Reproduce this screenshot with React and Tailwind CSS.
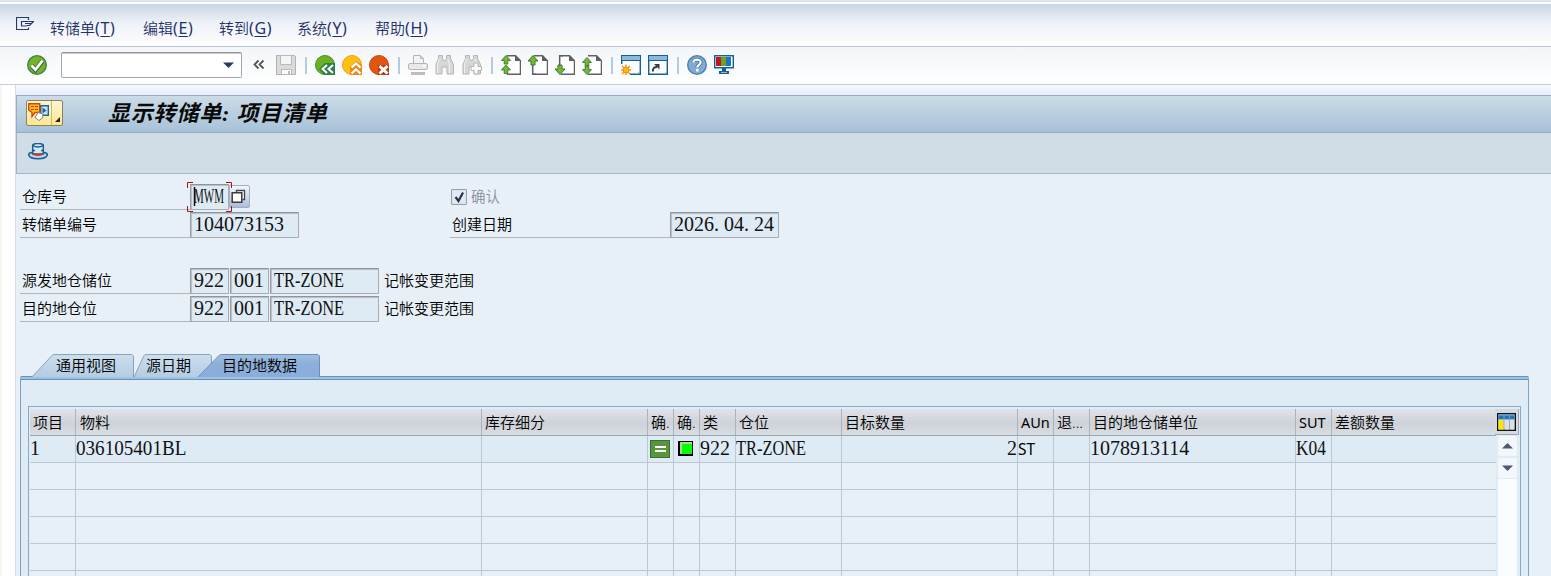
const SANS = "font-['Noto_Sans','Noto_Sans_CJK_SC',sans-serif]";

const MENUS = [
  { label: "转储单", hotkey: "T", cls: "w-[93px]" },
  { label: "编辑", hotkey: "E", cls: "w-[76px]" },
  { label: "转到", hotkey: "G", cls: "w-[78px]" },
  { label: "系统", hotkey: "Y", cls: "w-[78px]" },
  { label: "帮助", hotkey: "H", cls: "w-[76px]" },
];

const COLUMNS = [
  { title: "项目", cls: "w-[46px]", pad: "pl-[3px]" },
  { title: "物料", cls: "w-[406px]", pad: "pl-[4px]" },
  { title: "库存细分", cls: "w-[166px]", pad: "pl-[3px]" },
  { title: "确.", cls: "w-[26px]", pad: "pl-[3px]" },
  { title: "确.", cls: "w-[26px]", pad: "pl-[3px]" },
  { title: "类", cls: "w-[36px]", pad: "pl-[3px]" },
  { title: "仓位", cls: "w-[106px]", pad: "pl-[3px]" },
  { title: "目标数量", cls: "w-[176px]", pad: "pl-[3px]" },
  { title: "AUn", cls: "w-[36px]", pad: "pl-[3px]" },
  { title: "退...", cls: "w-[36px]", pad: "pl-[3px]" },
  { title: "目的地仓储单位", cls: "w-[206px]", pad: "pl-[3px]" },
  { title: "SUT", cls: "w-[36px]", pad: "pl-[3px]" },
  { title: "差额数量", cls: "w-[164px]", pad: "pl-[3px]" },
];

function Icon({ children, w = 20, h = 20 }) {
  return (
    <svg width={w} height={h} viewBox={`0 0 ${w} ${h}`} className="shrink-0" fill="none">
      {children}
    </svg>
  );
}

function Value({ children, squeeze = "" }) {
  return (
    <span className={`inline-block origin-left whitespace-pre font-['Liberation_Serif',serif] text-[20px] leading-6 text-[#111] ${squeeze}`}>
      {children}
    </span>
  );
}

function Separator() {
  return <div className="ml-[9px] mr-2 h-[17px] w-[2px] shrink-0 bg-[#b3cae3]" />;
}

function MenuBar() {
  return (
    <div className="flex h-[43px] items-start border-b border-[#bcc5d6] bg-linear-to-b from-[#c9d6e7] via-[#eef2f8] via-45% to-[#fdfdfe] pl-4">
      <div className="mt-[13px] w-[34px]">
        <Icon w={19} h={14}>
          <path d="M12.500 3V.500H.500v12h12v-2" stroke="#27396c" strokeWidth="1.200" />
          <path d="M18 4.500H5.500v4.500h5M9 6.500h7M17.500 4.500l-4 4h-3" stroke="#27396c" strokeWidth="1.200" />
        </Icon>
      </div>
      {MENUS.map((m) => (
        <div key={m.label} className={`${m.cls} mt-[14px] flex shrink-0 items-baseline whitespace-nowrap text-[15px] leading-5 text-[#1f3268]`}>
          <span>{m.label}</span>
          <span className="text-[16px] font-normal tracking-[0.6px]">
            (<span className="underline underline-offset-2">{m.hotkey}</span>)
          </span>
        </div>
      ))}
    </div>
  );
}

function CheckIcon() {
  return (
    <Icon>
      <circle cx="10" cy="10" r="9.300" fill="#73b428" stroke="#3c7d4d" strokeWidth="1.300" />
      <path d="M4.500 10.500l4 4.500 7-9" stroke="#31683a" strokeWidth="4.500" />
      <path d="M4.500 10.500l4 4.200 7-9" stroke="#fff" strokeWidth="2.700" />
    </Icon>
  );
}

function SaveIcon() {
  return (
    <Icon>
      <path d="M.5.500h18l1 1v18h-19z" fill="#dadada" stroke="#b2b2b2" />
      <path d="M4.500.500h11v9h-11z" fill="#f4f4f4" stroke="#b9b9b9" />
      <path d="M5.500 14.500h10v5h-10z" fill="#fff" stroke="#b9b9b9" />
      <path d="M12 16h2v3h-2z" fill="#b9b9b9" />
    </Icon>
  );
}

function BackIcon() {
  return (
    <Icon>
      <circle cx="10" cy="10" r="9.500" fill="#6eb11f" stroke="#458a34" />
      <path d="M4 14l6-6h10v12H9z" fill="#2f8049" />
      <path d="M12 10l-4.500 4 4.500 4M18 10l-4.500 4 4.500 4" stroke="#fff" strokeWidth="2" />
    </Icon>
  );
}

function ExitIcon() {
  return (
    <Icon>
      <circle cx="10" cy="10" r="9.500" fill="#ffc20f" stroke="#ec9b1c" />
      <path d="M8 12l6-6 6 4v10H8z" fill="#e88b21" />
      <path d="M9.500 12.500l4.500-4 4.500 4M9.500 18.500l4.500-4 4.500 4" stroke="#fff" strokeWidth="2.200" />
    </Icon>
  );
}

function CancelIcon() {
  return (
    <Icon>
      <circle cx="10" cy="10" r="9.500" fill="#e0560e" stroke="#c9490f" />
      <path d="M9 10h11v10H9z" fill="#b53c14" />
      <path d="M10.500 11l8 7.500M18.500 11l-8 7.500" stroke="#fff" strokeWidth="3" />
    </Icon>
  );
}

function PrintIcon() {
  return (
    <Icon>
      <path d="M5.500 8V.500h7l3 3V8" fill="#f3f3f3" stroke="#b5b5b5" />
      <path d="M12.500.500v3h3" stroke="#b5b5b5" />
      <rect x=".5" y="8.500" width="19" height="6" rx="1.500" fill="#e9e9e9" stroke="#b5b5b5" />
      <path d="M3 17h14v3H3z" fill="#bdbdbd" />
      <path d="M15 10h2v2h-2z" fill="#fff" />
    </Icon>
  );
}

function FindIcon({ plus }) {
  return (
    <Icon>
      <path d="M3.500.500h4v3l1 2h2l1-2v-3h4v3l3 6v9.500h-6.500v-7h-5v7H1V9.500l2.500-6z" fill="#d7d7d7" stroke="#b4b4b4" />
      <path d="M4 4l-1.500 6v8M13 4l1.500 6v8" stroke="#f0f0f0" />
      {plus && <path d="M12 8h4v3.500h3.500v4H16V19h-4v-3.500H9v-4h3z" fill="#fafafa" stroke="#b4b4b4" />}
    </Icon>
  );
}

const ARROW_UP = "M5 .5l5 5.500H7v4H3V6H0z";
const ARROW_DOWN = "M3 10h4v4h3l-5 5.500L0 14h3z";

function PageIcon({ kind }) {
  return (
    <Icon>
      <path d="M4.500 2V.800h10l5 5v13.400h-15" fill="#fff" />
      <path d="M6 .8h8.500l5 5v13.400H6" stroke="#606060" strokeWidth="1.500" />
      <path d="M14 0l6 6h-6z" fill="#606060" />
      {kind === "first" && (
        <>
          <path d={ARROW_UP} fill="#76b82a" stroke="#37763a" transform="translate(.5 0) scale(.9)" />
          <path d={ARROW_UP} fill="#76b82a" stroke="#37763a" transform="translate(.5 9.500) scale(.9)" />
        </>
      )}
      {kind === "prev" && (
        <>
          <path d="M4.700 9v10.200H8" stroke="#606060" strokeWidth="1.500" />
          <path d={ARROW_UP} fill="#76b82a" stroke="#37763a" />
        </>
      )}
      {kind === "next" && (
        <>
          <path d="M4.700 10V.800H8" stroke="#606060" strokeWidth="1.500" />
          <path d={ARROW_DOWN} fill="#76b82a" stroke="#37763a" />
        </>
      )}
      {kind === "last" && (
        <>
          <path d={ARROW_UP} fill="#76b82a" stroke="#37763a" transform="translate(.5 2) scale(.9)" />
          <path d={ARROW_DOWN} fill="#76b82a" stroke="#37763a" transform="translate(.5 2) scale(.9)" />
        </>
      )}
    </Icon>
  );
}

function WindowIcon({ shortcut }) {
  return (
    <Icon>
      <path d="M.7.700h18.600v18.600H.700z" fill="#fafcfd" stroke="#155f92" strokeWidth="1.400" />
      <path d="M1 1h18v4H1z" fill="#8eb7de" />
      <path d="M1 5.500h18" stroke="#155f92" />
      {shortcut ? (
        <>
          <path d="M5 16.500c-.5-3 1-4.500 4-4.500" stroke="#3c3c3c" strokeWidth="2" />
          <path d="M6 9h5.500v5.500z" fill="#3c3c3c" />
        </>
      ) : (
        <>
          <path d="M0 9h9v11H0z" fill="#fafcfd" />
          <path d="M5 9.500v11M0 15h10M1 11l8 8M9 11l-8 8" stroke="#f39c12" strokeWidth="1.500" />
          <circle cx="5" cy="15" r="3" fill="#ffb81c" stroke="#ee8b13" />
        </>
      )}
      <path d="M16 19l3-3" stroke="#9ab9cd" />
    </Icon>
  );
}

function HelpIcon() {
  return (
    <Icon>
      <circle cx="10" cy="10" r="9.300" fill="#81abd4" stroke="#477fa9" strokeWidth="1.300" />
      <path d="M6.300 7.500C6.500 3.700 13.800 3.700 13.600 7.500c-.1 2.200-3.400 2.500-3.400 5" stroke="#356c96" strokeWidth="3.800" />
      <path d="M6.300 7.500C6.500 3.700 13.800 3.700 13.600 7.500c-.1 2.200-3.400 2.500-3.400 5" stroke="#fff" strokeWidth="2.300" />
      <path d="M9 14h2.500v2.500H9z" fill="#fff" />
    </Icon>
  );
}

function MonitorIcon() {
  return (
    <Icon>
      <path d="M.7.700h18.600v12H.700z" fill="#fff" stroke="#155f92" strokeWidth="1.400" />
      <path d="M2 2h5v9H2z" fill="#c8141c" />
      <path d="M7 2h5v9H7z" fill="#66a623" />
      <path d="M12 2h5v9h-5z" fill="#1b76bd" />
      <path d="M8 13h4v3h3v3H5v-3h3z" fill="#155f92" />
      <path d="M7 17h6v1H7z" fill="#8eb7de" />
    </Icon>
  );
}

function Toolbar() {
  return (
    <div className="flex h-[38px] items-center border-b border-[#c5cedb] bg-linear-to-b from-[#f2f5f9] to-white pb-[1px] pl-[27px]">
      <CheckIcon />
      <div className="ml-[14px] flex h-[26px] w-[181px] items-center justify-end rounded-[2px] border border-[#a3a6ad] border-t-[#949494] bg-white pr-[7px] shadow-[inset_0_1px_0_#c9c9cc]">
        <Icon w={11} h={6}>
          <path d="M0 .5h11L5.500 6z" fill="#27396c" />
        </Icon>
      </div>
      <div className="ml-[11px] mr-[11px] flex">
        <Icon w={12} h={12}>
          <path d="M5.500 1.500L1.500 5.500l4 4M10.500 1.500l-4 4 4 4" stroke="#555" strokeWidth="1.800" />
        </Icon>
      </div>
      <SaveIcon />
      <Separator />
      <div className="flex gap-[7px]">
        <BackIcon />
        <ExitIcon />
        <CancelIcon />
      </div>
      <Separator />
      <div className="flex gap-[7px]">
        <PrintIcon />
        <FindIcon />
        <FindIcon plus />
      </div>
      <Separator />
      <div className="flex gap-[7px]">
        <PageIcon kind="first" />
        <PageIcon kind="prev" />
        <PageIcon kind="next" />
        <PageIcon kind="last" />
      </div>
      <Separator />
      <div className="flex gap-[7px]">
        <WindowIcon />
        <WindowIcon shortcut />
      </div>
      <Separator />
      <div className="flex gap-[7px]">
        <HelpIcon />
        <MonitorIcon />
      </div>
    </div>
  );
}

function TitleBar() {
  return (
    <>
      <div className="flex h-[37px] items-center border-l border-t border-[#95adc9] bg-linear-to-b from-[#cbdce7] to-[#a8c1d8] pl-[9px]">
        <div className="-mt-[2px] flex h-[26px] w-[37px] items-stretch overflow-hidden rounded-[2px] border border-[#8a8363] bg-linear-to-b from-[#fdf5d2] to-[#ffe78c]">
          <div className="flex w-[25px] shrink-0 items-start border-r border-[#c9b97a] pl-[1px] pt-[2px]">
            <Icon w={22} h={18}>
              <path d="M12.700 2.700h7.600v9.600h-7.600z" fill="#cbe1f2" stroke="#1c669b" strokeWidth="1.400" />
              <path d="M14.500 4.500v6l4-3z" fill="#1c669b" />
              <path d="M.7.700h11v8.800H7l-3 4v-4L.700 7z" fill="#ffbe0b" stroke="#d2451b" strokeWidth="1.400" />
              <path d="M3 3.500h3M7 3.500h3M3 6.500h3M7 6.500h3" stroke="#c83d17" />
              <path d="M10 9.500l5 1.500-.5 4-3.500 2.500-4-3z" fill="#fff" stroke="#848484" />
            </Icon>
          </div>
          <div className="flex flex-1 items-end justify-end p-[3px]">
            <Icon w={5} h={5}>
              <path d="M5 0v5H0z" fill="#222" />
            </Icon>
          </div>
        </div>
        <h1 className="ml-[45px] whitespace-pre font-['Liberation_Serif','Noto_Sans_CJK_SC',serif] text-[22px] font-bold italic leading-7 tracking-[0.8px] text-[#0a0a0a]">
          显示转储单: 项目清单
        </h1>
      </div>
      <div className="flex h-[42px] items-center border-b border-l border-t border-b-[#a4b6cc] border-l-[#9db3cc] border-t-[#92a9c4] bg-[#d0dde7] pb-[3px] pl-[11px]">
        <Icon w={20} h={17}>
          <path d="M4 9.500C1 9.500.7 11 .7 12c1 5 17.600 5 18.600 0 0-1-.3-2.500-3.300-2.500" fill="#b9d5eb" stroke="#155f92" strokeWidth="1.500" />
          <path d="M4.700 11V2c2-2 8.600-2 10.600 0v9z" fill="#d6e7f3" stroke="#155f92" strokeWidth="1.500" />
          <path d="M5 2.500c2.500 2 7.500 2 10 0M5 7.500h2M13 7.500h2" stroke="#155f92" strokeWidth="1.300" />
          <path d="M4.500 10.500c3 2 8 2 11 0" stroke="#c23b24" strokeWidth="2" />
        </Icon>
      </div>
    </>
  );
}

function Label({ children, w = "w-[170px]" }) {
  return (
    <div className={`${w} h-[26px] shrink-0 border-b border-[#b3b6b9] pl-[2px] pt-[1px] text-[15px] leading-[22px] text-black`}>
      {children}
    </div>
  );
}

function Field({ w, children }) {
  return (
    <div className={`${w} h-[26px] shrink-0 overflow-hidden whitespace-nowrap border border-[#a9adb1] border-l-[#9b9ea2] border-t-[#919497] bg-[#deebf4] pl-[3px] shadow-[inset_1px_1px_1px_#b3bec9]`}>
      <div className="-mt-[1px]">{children}</div>
    </div>
  );
}

function BinRow({ label }) {
  return (
    <div className="flex gap-[1px]">
      <div className="-mr-[1px] flex"><Label>{label}</Label></div>
      <Field w="w-[39px]"><Value>922</Value></Field>
      <Field w="w-[39px]"><Value>001</Value></Field>
      <Field w="w-[109px]"><Value squeeze="scale-x-[.82]">TR-ZONE</Value></Field>
      <span className="pl-[4px] pt-[1px] text-[15px] leading-[22px]">记帐变更范围</span>
    </div>
  );
}

function Form() {
  return (
    <div className="flex flex-col gap-[2px] pl-1 pt-[10px]">
      <div className="flex h-[26px]">
        <Label>仓库号</Label>
        <div className="relative">
          <Field w="w-[39px]">
            <Value squeeze="scale-x-[.55]">MWM</Value>
          </Field>
          <svg className="absolute -left-[3px] -top-[2px]" width="45" height="30" fill="none">
            <path d="M.5 6V.500H6M39 .5h5.500V6M.5 24v5.500H6M39 29.500h5.500V24" stroke="#a60f1b" />
            <path d="M7.500 5v19" stroke="#111" strokeWidth="1.500" />
          </svg>
        </div>
        <div className="mt-[1px] flex h-[23px] w-[21px] items-center justify-center rounded-r-[2px] border border-[#a3afc1] bg-linear-to-b from-[#f4f7fb] to-[#a9bedc] pr-[2px]">
          <Icon w={15} h={15}>
            <path d="M5.500 3.500v-2h8v9h-2" fill="#fff" stroke="#444" strokeWidth="1.300" />
            <path d="M1.200 3.800h9.600v9.400H1.200z" fill="#fff" stroke="#3b3b3b" strokeWidth="1.500" />
          </Icon>
        </div>
        <div className="ml-[201px] mt-[5px] flex h-4 w-4 items-center justify-center rounded-[1px] border border-[#9c9fa5] bg-[#dfebf4] shadow-[inset_0_0_1px_#9c9fa5]">
          <Icon w={12} h={12}>
            <path d="M2.500 6l3 4L10 1.500" stroke="#2d2f4b" strokeWidth="2.200" />
          </Icon>
        </div>
        <span className="ml-[4px] mt-[1px] text-[14.5px] leading-[22px] text-[#8b8d9b]">确认</span>
      </div>
      <div className="flex">
        <Label>转储单编号</Label>
        <Field w="w-[109px]"><Value>104073153</Value></Field>
        <div className="ml-[151px] flex">
          <Label w="w-[220px]">创建日期</Label>
          <Field w="w-[109px]">
            <Value>2026<span className="tracking-[5px]">.</span>04<span className="tracking-[5px]">.</span>24</Value>
          </Field>
        </div>
      </div>
      <div className="mt-7 flex flex-col gap-[2px]">
        <BinRow label="源发地仓储位" />
        <BinRow label="目的地仓位" />
      </div>
    </div>
  );
}

function Tab({ w, width, slope, pad, active, children }) {
  return (
    <div className={`${w} relative h-[23px] shrink-0`}>
      <svg className="absolute inset-0" width={width} height="23" fill="none">
        <defs>
          <linearGradient id={active ? "tabOn" : "tabOff"} x1="0" y1="0" x2="0" y2="1">
            <stop offset="0" stopColor={active ? "#a3bfdf" : "#ccdeee"} />
            <stop offset=".4" stopColor={active ? "#8cb0d9" : "#c2d7e9"} />
            <stop offset="1" stopColor={active ? "#8aaedb" : "#b4cde3"} />
          </linearGradient>
        </defs>
        <path
          d={`M0 23L${slope} 1.500Q${slope + 1} .5 ${slope + 3} .5H${width - 2}L${width - 0.5} 2V23`}
          fill={active ? "url(#tabOn)" : "url(#tabOff)"}
          stroke={active ? "#6691bf" : "#86a3c0"}
        />
      </svg>
      <div className={`${pad} relative whitespace-nowrap text-[15px] leading-[23px] text-black`}>{children}</div>
    </div>
  );
}

function HeaderCell({ col }) {
  return (
    <div className={`${col.cls} ${col.pad} h-[27px] shrink-0 overflow-hidden whitespace-nowrap border-b border-r border-b-[#9ba6b2] border-r-[#aab2ba] bg-linear-to-b from-[#e0e3e6] via-[#ced2d9] via-55% to-[#d9dee1] text-[15px] leading-[26px]`}>
      <span className={/^[A-Z]/.test(col.title) ? "text-[14.5px] font-normal" : ""}>{col.title}</span>
    </div>
  );
}

function Row({ cells = [], filled }) {
  return (
    <div className="flex">
      {COLUMNS.map((col, i) => (
        <div
          key={i}
          className={`${col.cls} h-[27px] shrink-0 overflow-hidden whitespace-nowrap border-b border-r border-[#bcc7d5] ${filled ? "bg-[#deebf5]" : "bg-[#e8f0f7]"} ${i === 7 ? "text-right" : ""} ${i === 12 ? "border-r-0" : ""}`}
        >
          {cells[i]}
        </div>
      ))}
    </div>
  );
}

const ITEM = [
  <Value>1</Value>,
  <Value squeeze="scale-x-[.955]">036105401BL</Value>,
  null,
  <div className="ml-[2px] mt-[4px] flex h-[18px] w-5 flex-col items-center justify-center gap-[2px] border border-[#3a6d35] bg-[#57963b]">
    <div className="h-[2px] w-[11px] bg-white" />
    <div className="h-[2px] w-[11px] bg-white" />
  </div>,
  <div className="ml-1 mt-[5px] h-[15px] w-[15px] border border-l-2 border-b-2 border-black bg-[#00ff00] shadow-[inset_1px_1px_0_1px_#a5d89a]" />,
  <Value>922</Value>,
  <Value squeeze="scale-x-[.82]">TR-ZONE</Value>,
  <Value>2</Value>,
  <span className="text-[15.5px] font-normal leading-[27px]">ST</span>,
  null,
  <Value>1078913114</Value>,
  <Value squeeze="scale-x-[.87]">K04</Value>,
  null,
];

function ScrollArrow({ down }) {
  return (
    <div className="flex h-5 w-[19px] items-center justify-center rounded-[2px] bg-[#f3f6fa]">
      <Icon w={11} h={6}>
        <path d={down ? "M0 .5h11L5.500 6z" : "M0 5.500h11L5.500 0z"} fill="#4a5b6e" />
      </Icon>
    </div>
  );
}

function ItemTable() {
  return (
    <div className="mx-[7px] flex h-[181px] border border-b-0 border-[#86a9ce] pl-[1px] pt-[2px]">
      <div className="shrink-0">
        <div className="flex">
          {COLUMNS.map((col, i) => (
            <HeaderCell key={i} col={col} />
          ))}
        </div>
        <Row cells={ITEM} filled />
        {[0, 1, 2, 3, 4].map((n) => (
          <Row key={n} />
        ))}
      </div>
      <div className="-ml-[1px] flex w-6 shrink-0 flex-col items-center">
        <div className="mb-[1px] flex h-[26px] w-6 items-center justify-center border-b border-r border-[#9ba6b2] bg-[#d6dade]">
          <Icon w={19} h={18}>
            <path d="M.7.700h17.600v16.600H.700z" fill="#fff" stroke="#111" strokeWidth="1.400" />
            <path d="M1.500 1.500h16v5h-16z" fill="#1f76bc" />
            <path d="M1.500 2h16" stroke="#78b4df" />
            <path d="M1.500 7h5v9.500h-5z" fill="#ffe600" />
            <path d="M8 7h4v9.500H8zM13.500 7H17v9.500h-3.500z" fill="#dce0e5" />
            <path d="M7 1.500v15M12.700 1.500v15" stroke="#8b98a4" />
          </Icon>
        </div>
        <ScrollArrow />
        <div className="h-[2px] shrink-0" />
        <ScrollArrow down />
        <div className="mt-[1px] w-[19px] flex-1 bg-[#fbfcfd]" />
      </div>
    </div>
  );
}

function TabStrip() {
  return (
    <div className="ml-1 mt-8 w-[1509px]">
      <div className="flex pl-3">
        <Tab w="w-[102px]" width={102} slope={20} pad="pl-6">通用视图</Tab>
        <Tab w="w-[78px]" width={78} slope={10} pad="pl-[12px]">源日期</Tab>
        <div className="-ml-[14px]">
          <Tab w="w-[122px]" width={122} slope={21} pad="pl-6" active>目的地数据</Tab>
        </div>
      </div>
      <div className="-mt-[1px] h-1 rounded-t-[2px] border-b border-t border-b-[#6591bd] border-t-[#6591bd] bg-[#a2c0e0]" />
      <div className="h-[197px] border-x border-[#7ea3ca] bg-[#dfebf5] pt-[26px]">
        <ItemTable />
      </div>
    </div>
  );
}

export default function App() {
  return (
    <div className={`${SANS} flex h-[576px] w-[1551px] flex-col overflow-hidden bg-white font-[350] text-black`}>
      <div className="h-1 shrink-0 border-b-2 border-white bg-[#dbe5f2]" />
      <div className="shrink-0">
        <MenuBar />
        <Toolbar />
      </div>
      <div className="flex flex-1 border-l-2 border-[#f5f5f6]">
        <div className="w-[13px] shrink-0 bg-white" />
        <main className="w-[1536px] shrink-0 border-l border-[#d2dcea] bg-[#e8f0f7]">
          <div className="h-[10px] bg-linear-to-b from-[#f5f8fc] to-[#e9eff7]" />
          <TitleBar />
          <Form />
          <TabStrip />
        </main>
      </div>
    </div>
  );
}
